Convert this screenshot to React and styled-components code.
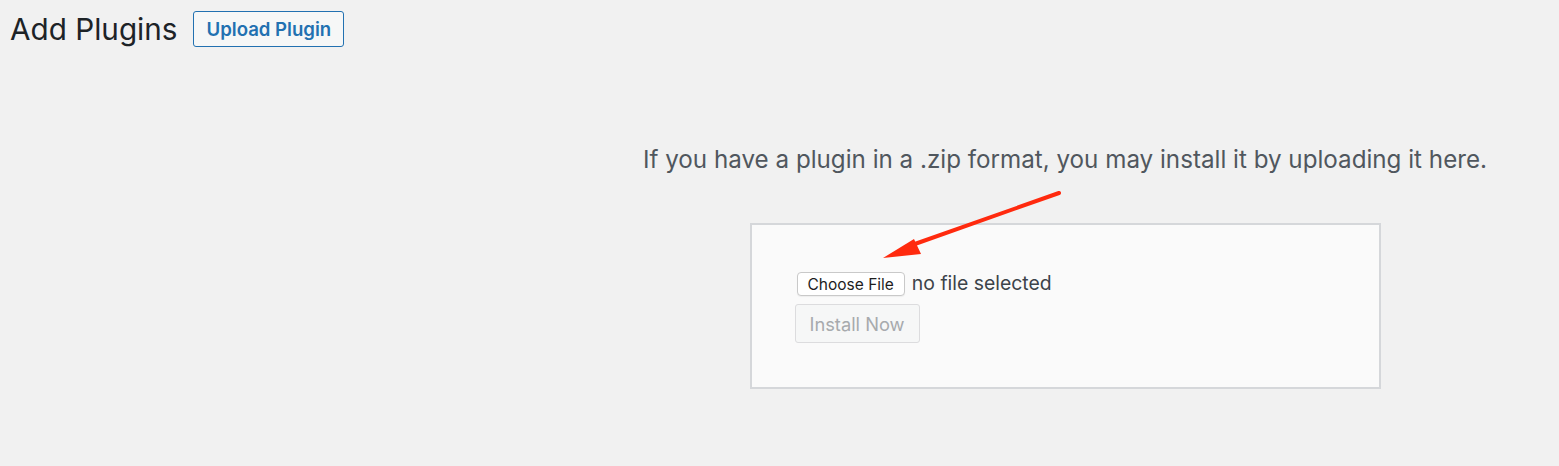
import React from "react";
import styled, { createGlobalStyle } from "styled-components";

const GlobalStyle = createGlobalStyle`
  html, body {
    margin: 0;
    padding: 0;
    background: #f1f1f1;
  }
  body {
    font-family: Inter, "Noto Sans", "Liberation Sans", sans-serif;
    color: #3c434a;
  }
`;

function Arrow() {
  return (
    <ArrowLayer width="1559" height="466" viewBox="0 0 1559 466">
      <line
        x1="1059"
        y1="193"
        x2="912"
        y2="245"
        stroke="#ff2a0e"
        strokeWidth="4"
        strokeLinecap="round"
      />
      <polygon points="883,258 914,239 921,254" fill="#ff2a0e" />
    </ArrowLayer>
  );
}

export default function App() {
  return (
    <Page>
      <GlobalStyle />
      <Header>
        <Title>Add Plugins</Title>
        <UploadToggle>Upload Plugin</UploadToggle>
      </Header>
      <UploadSection>
        <Description>
          If you have a plugin in a .zip format, you may install it by
          uploading it here.
        </Description>
        <UploadBox>
          <FileRow>
            <ChooseFile>Choose File</ChooseFile>
            <FileName>no file selected</FileName>
          </FileRow>
          <InstallButton disabled>Install Now</InstallButton>
        </UploadBox>
      </UploadSection>
      <Arrow />
    </Page>
  );
}

const Page = styled.div`
  position: relative;
  min-height: 466px;
  box-sizing: border-box;
  padding: 11px 0 0 10px;
  overflow: hidden;
`;

const Header = styled.div`
  display: flex;
  align-items: center;
  gap: 15px;
`;

const Title = styled.h1`
  margin: 0;
  font-size: 29.7px;
  font-weight: 400;
  line-height: 35px;
  color: #1d2327;
`;

const UploadToggle = styled.button`
  height: 36px;
  padding: 0 12px 0 13px;
  border: 1px solid #2271b1;
  border-radius: 3px;
  background: #f6f7f7;
  color: #2271b1;
  font-family: inherit;
  font-size: 18.6px;
  font-weight: 600;
  cursor: pointer;
`;

const UploadSection = styled.section`
  display: flex;
  flex-direction: column;
  align-items: center;
  padding-left: 561px;
  margin-top: 97px;
`;

const Description = styled.p`
  margin: 0;
  font-size: 24.2px;
  line-height: 32px;
  color: #50575e;
  text-align: center;
  white-space: nowrap;
`;

const UploadBox = styled.div`
  box-sizing: border-box;
  width: 631px;
  height: 166px;
  margin-top: 47px;
  padding: 45px 43px 0;
  border: 2px solid #d5d7da;
  background: #fafafa;
  display: flex;
  flex-direction: column;
  align-items: flex-start;
  gap: 6px;
`;

const FileRow = styled.div`
  display: flex;
  align-items: center;
  height: 28px;
  gap: 7px;
  padding-left: 2px;
`;

const ChooseFile = styled.button`
  height: 24px;
  padding: 0 10px;
  border: 1px solid #c9c9c9;
  border-radius: 4px;
  background: #ffffff;
  color: #1d1d1d;
  font-family: inherit;
  font-size: 15.5px;
  box-shadow: 0 1px 1px rgba(0, 0, 0, 0.05);
`;

const FileName = styled.span`
  font-size: 19.4px;
  color: #3c434a;
  margin-top: -3px;
`;

const InstallButton = styled.button`
  height: 39px;
  padding: 0 14px;
  border: 1px solid #dcdcde;
  border-radius: 3px;
  background: #f6f7f7;
  color: #a7aaad;
  font-family: inherit;
  font-size: 18.3px;
`;

const ArrowLayer = styled.svg`
  position: absolute;
  left: 0;
  top: 0;
  pointer-events: none;
`;
